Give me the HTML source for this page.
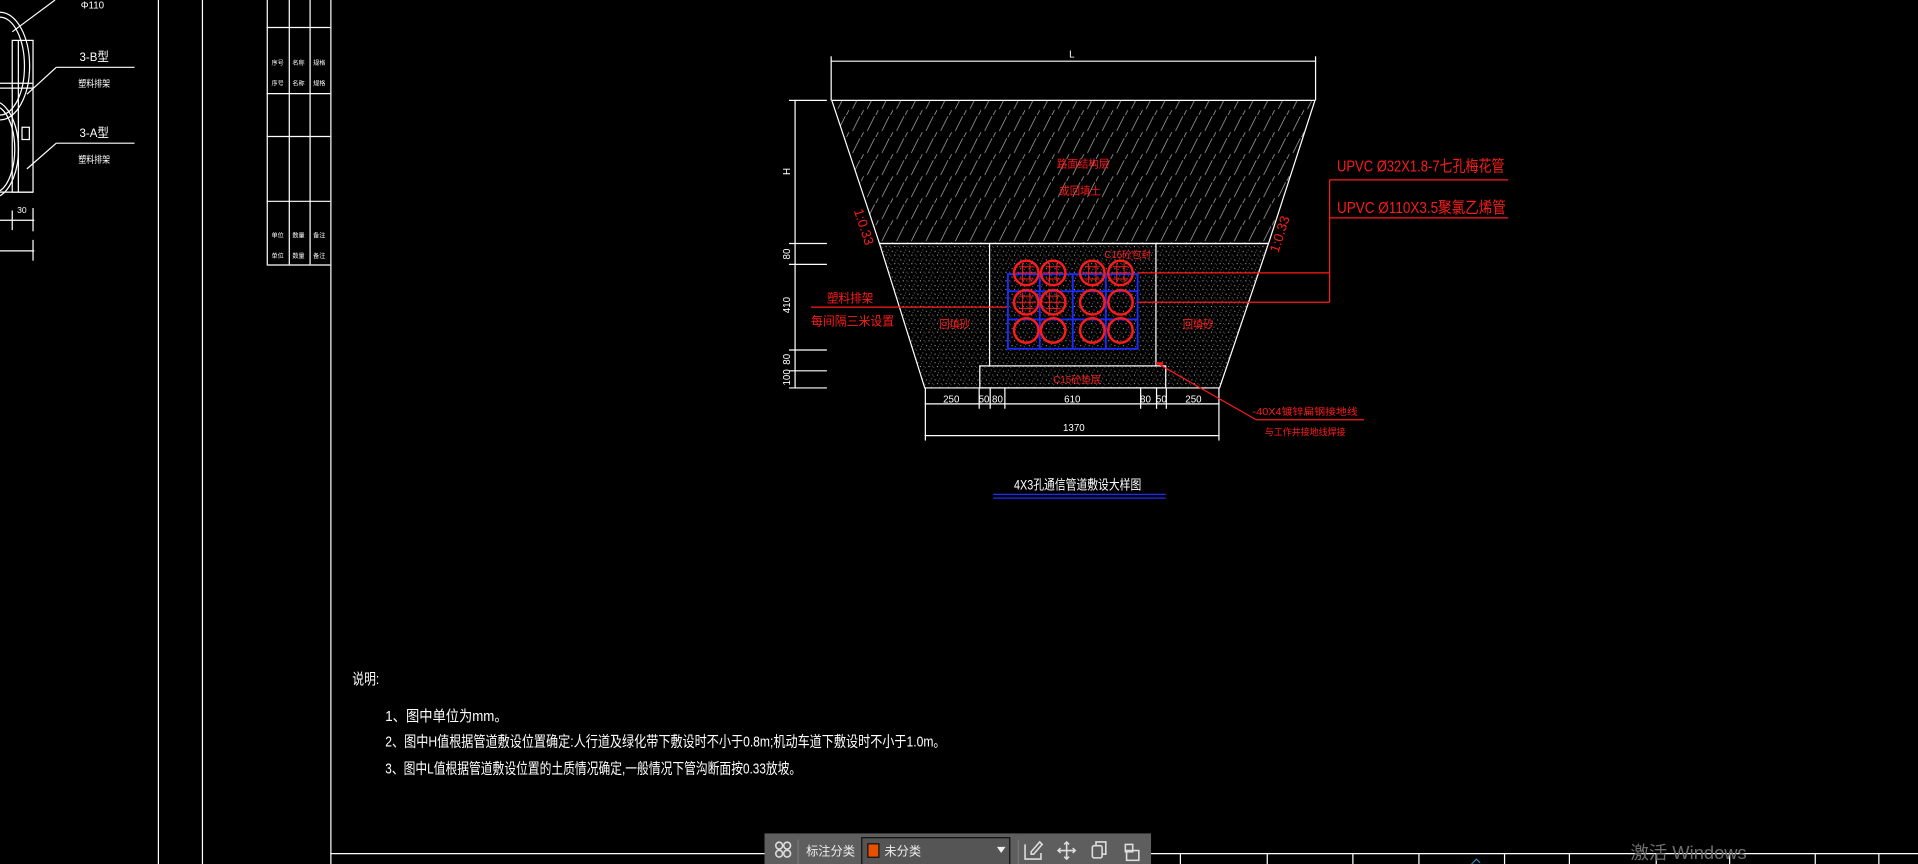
<!DOCTYPE html>
<html><head><meta charset="utf-8"><style>
html,body{margin:0;padding:0;background:#000;overflow:hidden}
svg{display:block}
text{font-family:"Liberation Sans","Noto Sans CJK SC",sans-serif}
</style></head><body>
<svg width="1918" height="864" viewBox="0 0 1568 706" preserveAspectRatio="none" xmlns="http://www.w3.org/2000/svg">
<defs>
<pattern id="hatch" width="12" height="18" patternUnits="userSpaceOnUse">
<line x1="1" y1="17" x2="7" y2="5" stroke="#bdbdbd" stroke-width="0.55"/>
<line x1="8" y1="4" x2="10" y2="0" stroke="#bdbdbd" stroke-width="0.55"/>
</pattern>
<pattern id="sand" width="7" height="7" patternUnits="userSpaceOnUse">
<rect x="1" y="2" width="0.9" height="0.9" fill="#999"/><rect x="5" y="1" width="0.8" height="0.8" fill="#777"/>
<rect x="3" y="5" width="0.9" height="0.9" fill="#aaa"/><rect x="6" y="5" width="0.7" height="0.7" fill="#888"/>
<rect x="0" y="6" width="0.7" height="0.7" fill="#777"/><rect x="4" y="3" width="0.6" height="0.6" fill="#bbb"/>
</pattern>
</defs>
<rect width="1568" height="706" fill="#000"/>
<g stroke="#fff" stroke-width="1" fill="none">
<line x1="129.5" y1="0" x2="129.5" y2="706"/>
<line x1="165.5" y1="0" x2="165.5" y2="706"/>
<line x1="270.5" y1="0" x2="270.5" y2="706"/>
<line x1="218.5" y1="0" x2="218.5" y2="216"/>
<line x1="236.5" y1="0" x2="236.5" y2="216"/>
<line x1="253.5" y1="0" x2="253.5" y2="216"/>
<line x1="218" y1="22.5" x2="270" y2="22.5"/>
<line x1="218" y1="76.5" x2="270" y2="76.5"/>
<line x1="218" y1="111.5" x2="270" y2="111.5"/>
<line x1="218" y1="164.5" x2="270" y2="164.5"/>
<line x1="218" y1="216.5" x2="270" y2="216.5"/>
<path d="M0 10 A22 40 0 0 1 0 98"/><path d="M0 14 A18 36 0 0 1 0 94"/>
<path d="M0 84 A22 40 0 0 1 0 160"/><path d="M0 88 A18 36 0 0 1 0 156"/>
<rect x="10" y="33" width="17" height="124"/><line x1="15" y1="33" x2="15" y2="157"/>
<line x1="0" y1="68" x2="27" y2="68"/><line x1="0" y1="72" x2="27" y2="72"/>
<rect x="18" y="104" width="6" height="10"/>
<line x1="10" y1="26" x2="45" y2="0"/>
<line x1="22" y1="77" x2="46" y2="55"/><line x1="46" y1="55" x2="110" y2="55"/>
<line x1="22" y1="138" x2="46" y2="117"/><line x1="46" y1="117" x2="110" y2="117"/>
<line x1="0" y1="180" x2="28" y2="180"/><line x1="10" y1="172" x2="10" y2="188"/><line x1="27" y1="170" x2="27" y2="189"/>
<line x1="0" y1="205" x2="28" y2="205"/><line x1="27" y1="196" x2="27" y2="213"/>
<line x1="0" y1="157" x2="27" y2="157"/>
<line x1="270" y1="697.5" x2="1568" y2="697.5"/>
<g>
<line x1="965" y1="697" x2="965" y2="706"/><line x1="1036" y1="697" x2="1036" y2="706"/>
<line x1="1106" y1="697" x2="1106" y2="706"/><line x1="1160" y1="697" x2="1160" y2="706"/>
<line x1="1230" y1="697" x2="1230" y2="706"/><line x1="1283" y1="697" x2="1283" y2="706"/>
<line x1="1354" y1="697" x2="1354" y2="706"/><line x1="1414" y1="697" x2="1414" y2="706"/>
<line x1="1484" y1="697" x2="1484" y2="706"/><line x1="1536" y1="697" x2="1536" y2="706"/>
</g>
</g>
<g fill="#fff" font-size="8">
<text x="66" y="7">Φ110</text>
<text x="65" y="50" font-size="10" textLength="24" lengthAdjust="spacingAndGlyphs">3-B型</text>
<text x="64" y="71" textLength="26" lengthAdjust="spacingAndGlyphs">塑料排架</text>
<text x="65" y="112" font-size="10" textLength="24" lengthAdjust="spacingAndGlyphs">3-A型</text>
<text x="64" y="133" textLength="26" lengthAdjust="spacingAndGlyphs">塑料排架</text>
<text x="14" y="174" font-size="7">30</text>
<g font-size="5">
<text x="222" y="53">序号</text><text x="239" y="53">名称</text><text x="256" y="53">规格</text>
<text x="222" y="70">序号</text><text x="239" y="70">名称</text><text x="256" y="70">规格</text>
<text x="222" y="194">单位</text><text x="239" y="194">数量</text><text x="256" y="194">备注</text>
<text x="222" y="211">单位</text><text x="239" y="211">数量</text><text x="256" y="211">备注</text>
</g>
</g>

<polygon points="680,82 1075,82 1037,199 719,199" fill="url(#hatch)" stroke="#fff"/>
<polygon points="719,199 1037,199 997,317 756,317" fill="url(#sand)" stroke="#fff"/>
<g stroke="#fff" fill="none">
<line x1="809" y1="199" x2="809" y2="299"/><line x1="945" y1="199" x2="945" y2="299"/>
<rect x="801" y="299" width="152" height="18"/>
<line x1="679" y1="50" x2="1076" y2="50"/><line x1="679.5" y1="46" x2="679.5" y2="82"/><line x1="1075.5" y1="46" x2="1075.5" y2="82"/>
<line x1="650" y1="82" x2="650" y2="317"/>
<line x1="645" y1="82" x2="676" y2="82"/><line x1="645" y1="199" x2="676" y2="199"/>
<line x1="645" y1="216" x2="676" y2="216"/><line x1="645" y1="286" x2="676" y2="286"/>
<line x1="645" y1="303" x2="676" y2="303"/><line x1="645" y1="317" x2="676" y2="317"/>
<line x1="756" y1="330" x2="997" y2="330"/><line x1="756" y1="356" x2="997" y2="356"/>
<line x1="756.5" y1="317" x2="756.5" y2="360"/><line x1="996.5" y1="317" x2="996.5" y2="360"/>
<line x1="800.5" y1="317" x2="800.5" y2="334"/><line x1="809.5" y1="317" x2="809.5" y2="334"/>
<line x1="821.5" y1="317" x2="821.5" y2="334"/><line x1="932.5" y1="317" x2="932.5" y2="334"/>
<line x1="945.5" y1="317" x2="945.5" y2="334"/><line x1="953.5" y1="317" x2="953.5" y2="334"/>
</g>
<g fill="#fff" font-size="8">
<text x="874" y="47">L</text>
<text x="646" y="143" transform="rotate(-90 646 143)">H</text>
<text x="646" y="212" transform="rotate(-90 646 212)">80</text>
<text x="646" y="256" transform="rotate(-90 646 256)">410</text>
<text x="646" y="298" transform="rotate(-90 646 298)">80</text>
<text x="646" y="315" transform="rotate(-90 646 315)">100</text>
<text x="771" y="329">250</text><text x="800" y="329">50</text><text x="811" y="329">80</text>
<text x="870" y="329">610</text><text x="932" y="329">80</text><text x="945" y="329">50</text><text x="969" y="329">250</text>
<text x="869" y="352">1370</text>
<text x="829" y="400" font-size="11" textLength="104" lengthAdjust="spacingAndGlyphs">4X3孔通信管道敷设大样图</text>
</g>
<line x1="812" y1="404" x2="953" y2="404" stroke="#1e2cff"/>
<line x1="812" y1="407" x2="953" y2="407" stroke="#1e2cff"/>

<g stroke="#1a2cff" stroke-width="1.5" fill="none">
<rect x="824" y="224" width="106" height="61"/>
<line x1="824" y1="238" x2="930" y2="238"/><line x1="824" y1="261" x2="930" y2="261"/>
<line x1="850" y1="224" x2="850" y2="285"/><line x1="877" y1="224" x2="877" y2="285"/><line x1="904" y1="224" x2="904" y2="285"/>
</g>
<g stroke="#ff1a1a" stroke-width="2" fill="none">
<circle cx="839" cy="223" r="10"/><circle cx="861" cy="223" r="10"/><circle cx="893" cy="223" r="10"/><circle cx="916" cy="223" r="10"/>
<circle cx="839" cy="247" r="10"/><circle cx="861" cy="247" r="10"/><circle cx="893" cy="247" r="10"/><circle cx="916" cy="247" r="10"/>
<circle cx="839" cy="270" r="10"/><circle cx="861" cy="270" r="10"/><circle cx="893" cy="270" r="10"/><circle cx="916" cy="270" r="10"/>
</g>
<g stroke="#ff1a1a" stroke-width="0.8" fill="none">
<path d="M833 218h12M831 223h16M833 228h12M836 215v16M842 215v16"/>
<path d="M855 218h12M853 223h16M855 228h12M858 215v16M864 215v16"/>
<path d="M887 218h12M885 223h16M887 228h12M890 215v16M896 215v16"/>
<path d="M910 218h12M908 223h16M910 228h12M913 215v16M919 215v16"/>
<path d="M833 242h12M831 247h16M833 252h12M836 239v16M842 239v16"/>
<path d="M855 242h12M853 247h16M855 252h12M858 239v16M864 239v16"/>
</g>
<g stroke="#ff1a1a" fill="none">
<line x1="1087" y1="147" x2="1233" y2="147"/><line x1="1087" y1="178" x2="1233" y2="178"/>
<line x1="1087" y1="147" x2="1087" y2="247"/>
<line x1="930" y1="223" x2="1087" y2="223"/><line x1="930" y1="247" x2="1087" y2="247"/>
<line x1="663" y1="251" x2="823" y2="251"/>
<line x1="948" y1="298" x2="1027" y2="343"/><line x1="1027" y1="343" x2="1115" y2="343"/>
</g>
<rect x="945" y="296" width="6" height="2" fill="#ff1a1a"/>
<g fill="#ff1a1a" font-size="11">
<text x="1093" y="140" font-size="13" textLength="137" lengthAdjust="spacingAndGlyphs">UPVC Ø32X1.8-7七孔梅花管</text>
<text x="1093" y="174" font-size="13" textLength="138" lengthAdjust="spacingAndGlyphs">UPVC Ø110X3.5聚氯乙烯管</text>
<text x="864" y="137" font-size="9" textLength="43" lengthAdjust="spacingAndGlyphs">路面结构层</text>
<text x="866" y="159" font-size="9" textLength="34" lengthAdjust="spacingAndGlyphs">或回填土</text>
<text x="768" y="268" font-size="9" textLength="25" lengthAdjust="spacingAndGlyphs">回填砂</text>
<text x="967" y="268" font-size="9" textLength="25" lengthAdjust="spacingAndGlyphs">回填砂</text>
<text x="903" y="211" font-size="8" textLength="38" lengthAdjust="spacingAndGlyphs">C15砼包封</text>
<text x="861" y="313" font-size="8" textLength="39" lengthAdjust="spacingAndGlyphs">C15砼垫层</text>
<text x="676" y="247" font-size="10" textLength="38" lengthAdjust="spacingAndGlyphs">塑料排架</text>
<text x="663" y="266" font-size="10" textLength="68" lengthAdjust="spacingAndGlyphs">每间隔三米设置</text>
<text x="1024" y="339" font-size="8" textLength="86" lengthAdjust="spacingAndGlyphs">-40X4镀锌扁钢接地线</text>
<text x="1034" y="356" font-size="8" textLength="66" lengthAdjust="spacingAndGlyphs">与工作井接地线焊接</text>
<text x="0" y="0" font-size="11" transform="translate(698,172) rotate(72)">1:0.33</text>
<text x="0" y="0" font-size="11" transform="translate(1045,207) rotate(-72)">1:0.33</text>
</g>

<g fill="#fff" font-size="12">
<text x="288" y="559" textLength="22" lengthAdjust="spacingAndGlyphs">说明:</text>
<text x="315" y="589" textLength="100" lengthAdjust="spacingAndGlyphs">1、图中单位为mm。</text>
<text x="315" y="610" textLength="458" lengthAdjust="spacingAndGlyphs">2、图中H值根据管道敷设位置确定:人行道及绿化带下敷设时不小于0.8m;机动车道下敷设时不小于1.0m。</text>
<text x="315" y="632" textLength="340" lengthAdjust="spacingAndGlyphs">3、图中L值根据管道敷设位置的土质情况确定,一般情况下管沟断面按0.33放坡。</text>
</g>

<rect x="625" y="681" width="316" height="25" fill="#5e5e5e"/>
<rect x="704.5" y="684.5" width="121" height="22" fill="#555" stroke="#111"/>
<line x1="652.5" y1="686" x2="652.5" y2="706" stroke="#777"/>
<line x1="832.5" y1="686" x2="832.5" y2="706" stroke="#777"/>
<g fill="none" stroke="#ddd" stroke-width="1.3">
<circle cx="637" cy="691" r="2.8"/><circle cx="643.5" cy="691" r="2.8"/><circle cx="637" cy="697.5" r="2.8"/><circle cx="643.5" cy="697.5" r="2.8"/>
<path d="M838 690v12h13v-5M843 696l7-8 2 2-7 8h-2z"/>
<path d="M872 688v14M865 695h14M870 690l2-2 2 2M870 700l2 2 2-2M867 693l-2 2 2 2M877 693l2 2-2 2"/>
<rect x="893" y="691" width="8" height="10" rx="1.5"/><path d="M896 691v-3h8v10h-3"/>
<rect x="920" y="690" width="6" height="6"/><rect x="921" y="695" width="10" height="8"/>
</g>
<g fill="#eee" font-size="10"><text x="659" y="699">标注分类</text><text x="723" y="699">未分类</text></g>
<rect x="709.5" y="689.5" width="9" height="11" fill="#e65100" stroke="#111"/>
<path d="M815 692h7l-3.5 5z" fill="#eee"/>
<text x="1333" y="702" fill="#6e6e6e" font-size="15">激活 Windows</text>
<path d="M1203 706l4-4 3 3" stroke="#2a9fd8" fill="none" stroke-width="0.8"/>
</svg>
</body></html>
